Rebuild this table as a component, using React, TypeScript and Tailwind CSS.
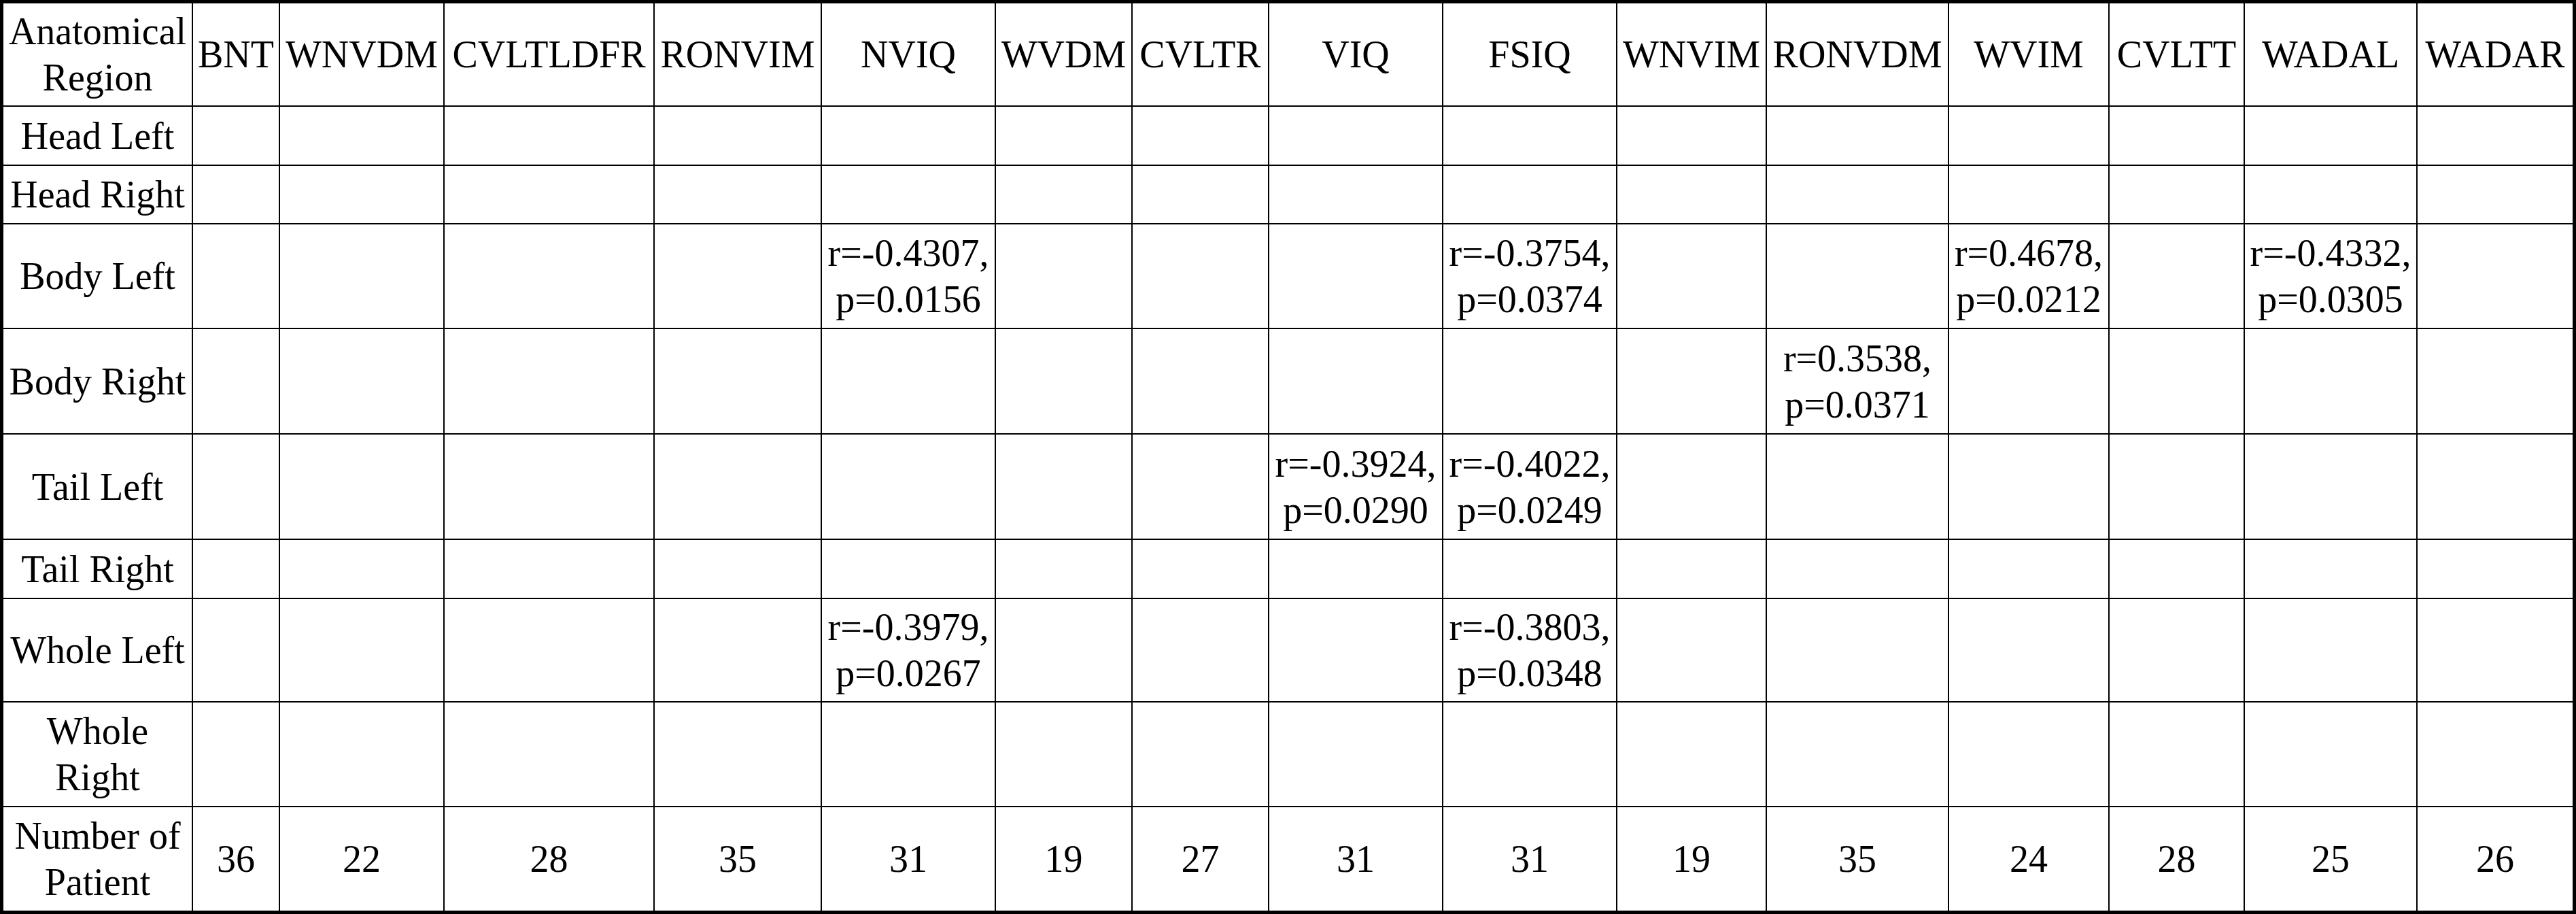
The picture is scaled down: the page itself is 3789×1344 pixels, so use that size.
import React from 'react';

interface Column {
  name: string;
  width: string;
  count: number;
}

interface Row {
  label: React.ReactNode;
  height: string;
  cells: Record<string, [string, string]>;
}

const columns: Column[] = [
  { name: 'BNT', width: 'w-[128px]', count: 36 },
  { name: 'WNVDM', width: 'w-[242px]', count: 22 },
  { name: 'CVLTLDFR', width: 'w-[309px]', count: 28 },
  { name: 'RONVIM', width: 'w-[246px]', count: 35 },
  { name: 'NVIQ', width: 'w-[256px]', count: 31 },
  { name: 'WVDM', width: 'w-[201px]', count: 19 },
  { name: 'CVLTR', width: 'w-[201px]', count: 27 },
  { name: 'VIQ', width: 'w-[256px]', count: 31 },
  { name: 'FSIQ', width: 'w-[256px]', count: 31 },
  { name: 'WNVIM', width: 'w-[220px]', count: 19 },
  { name: 'RONVDM', width: 'w-[268px]', count: 35 },
  { name: 'WVIM', width: 'w-[236px]', count: 24 },
  { name: 'CVLTT', width: 'w-[199px]', count: 28 },
  { name: 'WADAL', width: 'w-[254px]', count: 25 },
  { name: 'WADAR', width: 'w-[228px]', count: 26 },
];

const rows: Row[] = [
  { label: 'Head Left', height: 'h-[87px]', cells: {} },
  { label: 'Head Right', height: 'h-[86px]', cells: {} },
  {
    label: 'Body Left',
    height: 'h-[154px]',
    cells: {
      NVIQ: ['r=-0.4307,', 'p=0.0156'],
      FSIQ: ['r=-0.3754,', 'p=0.0374'],
      WVIM: ['r=0.4678,', 'p=0.0212'],
      WADAL: ['r=-0.4332,', 'p=0.0305'],
    },
  },
  {
    label: 'Body Right',
    height: 'h-[155px]',
    cells: { RONVDM: ['r=0.3538,', 'p=0.0371'] },
  },
  {
    label: 'Tail Left',
    height: 'h-[155px]',
    cells: {
      VIQ: ['r=-0.3924,', 'p=0.0290'],
      FSIQ: ['r=-0.4022,', 'p=0.0249'],
    },
  },
  { label: 'Tail Right', height: 'h-[87px]', cells: {} },
  {
    label: 'Whole Left',
    height: 'h-[152px]',
    cells: {
      NVIQ: ['r=-0.3979,', 'p=0.0267'],
      FSIQ: ['r=-0.3803,', 'p=0.0348'],
    },
  },
  {
    label: (
      <>
        Whole
        <br />
        Right
      </>
    ),
    height: 'h-[154px]',
    cells: {},
  },
];

// right/bottom rules only; the wrapper draws the thick frame
const cellBase = 'border-black p-0 text-center align-middle whitespace-nowrap font-normal';

function cls(col: number, last: boolean) {
  const r = col === columns.length ? 'border-r-0' : 'border-r-2';
  const b = last ? 'border-b-0' : 'border-b-2';
  return `${cellBase} ${r} ${b}`;
}

export default function App() {
  return (
    <div className="w-[3789px] h-[1344px] bg-white border-[5px] border-black overflow-hidden">
      <table
        className="table-fixed border-separate border-spacing-0 w-[3779px] text-black text-[56px] leading-[68px]"
        style={{ fontFamily: '"Liberation Serif", "Times New Roman", serif' }}
      >
        <colgroup>
          <col className="w-[279px]" />
          {columns.map((c) => (
            <col key={c.name} className={c.width} />
          ))}
        </colgroup>
        <thead>
          <tr className="h-[152px]">
            <th className={cls(0, false)}>
              Anatomical
              <br />
              Region
            </th>
            {columns.map((c, i) => (
              <th key={c.name} className={cls(i + 1, false)}>
                {c.name}
              </th>
            ))}
          </tr>
        </thead>
        <tbody>
          {rows.map((row, ri) => (
            <tr key={ri} className={row.height}>
              <td className={cls(0, false)}>{row.label}</td>
              {columns.map((c, i) => {
                const v = row.cells[c.name];
                return (
                  <td key={c.name} className={cls(i + 1, false)}>
                    {v && (
                      <>
                        {v[0]}
                        <br />
                        {v[1]}
                      </>
                    )}
                  </td>
                );
              })}
            </tr>
          ))}
          <tr className="h-[152px]">
            <td className={cls(0, true)}>
              Number of
              <br />
              Patient
            </td>
            {columns.map((c, i) => (
              <td key={c.name} className={cls(i + 1, true)}>
                {c.count}
              </td>
            ))}
          </tr>
        </tbody>
      </table>
    </div>
  );
}
